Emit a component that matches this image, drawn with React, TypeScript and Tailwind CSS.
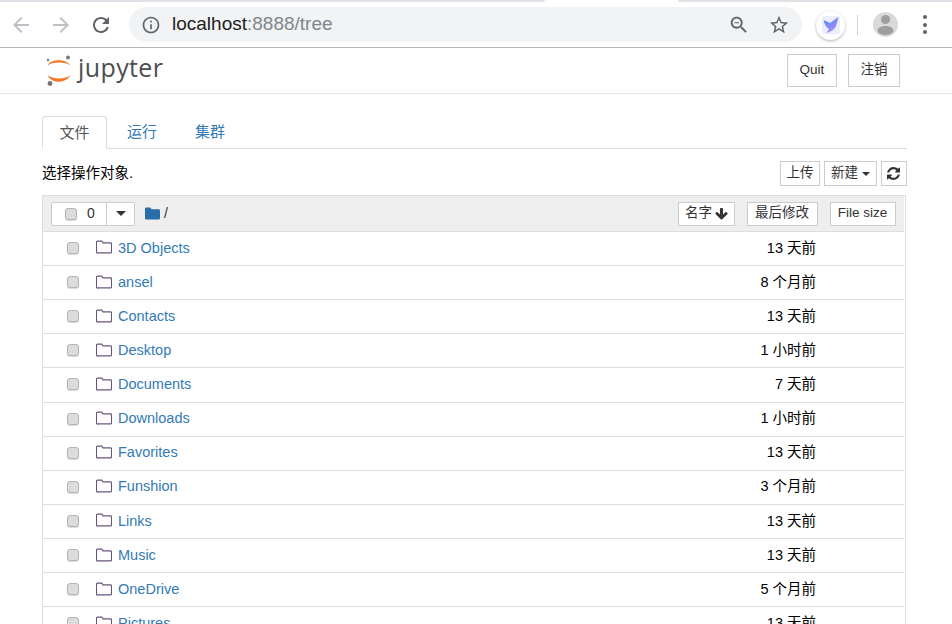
import React from "react";

const M = ({ d, className }: { d: string; className?: string }) => (
  <svg viewBox="0 0 24 24" className={className} fill="currentColor">
    <path d={d} />
  </svg>
);

const rows: [string, string][] = [
  ["3D Objects", "13 天前"],
  ["ansel", "8 个月前"],
  ["Contacts", "13 天前"],
  ["Desktop", "1 小时前"],
  ["Documents", "7 天前"],
  ["Downloads", "1 小时前"],
  ["Favorites", "13 天前"],
  ["Funshion", "3 个月前"],
  ["Links", "13 天前"],
  ["Music", "13 天前"],
  ["OneDrive", "5 个月前"],
  ["Pictures", "13 天前"],
];

const Check = ({ className }: { className?: string }) => (
  <span className={`block w-[12px] h-[12px] rounded-[3px] bg-[#dcdcdc] border border-[#b4b4b4] shadow-[0_1px_1px_rgba(0,0,0,0.15)] ${className ?? ""}`} />
);

const Caret = ({ className }: { className?: string }) => (
  <span className={`block w-0 h-0 border-x-[4.5px] border-x-transparent border-t-[4.5px] border-t-[#333] ${className ?? ""}`} />
);

const Btn = ({ children, className }: { children: React.ReactNode; className?: string }) => (
  <div className={`flex items-center justify-center border border-[#ccc] bg-white text-[#333] text-[13.5px] ${className ?? ""}`}>{children}</div>
);

export default function App() {
  return (
    <div className="w-[952px] h-[624px] overflow-hidden bg-white text-black font-['Liberation_Sans','Noto_Sans_CJK_SC',sans-serif]">
      {/* browser chrome */}
      <div className="flex h-[2px] bg-white">
        <div className="w-[545px] bg-[#dee1e6] rounded-br-[4px]" />
        <div className="w-[133px]" />
        <div className="flex-1 bg-[#dee1e6] rounded-bl-[4px]" />
      </div>
      <div className="flex items-center h-[45px] border-b border-[#b4b4b4] box-content">
        <M className="ml-[9px] w-[24px] h-[24px] text-[#bdc1c6]" d="M20 11H7.83l5.59-5.59L12 4l-8 8 8 8 1.41-1.41L7.83 13H20v-2z" />
        <M className="ml-[16px] w-[24px] h-[24px] text-[#bdc1c6]" d="M12 4l-1.41 1.41L16.17 11H4v2h12.17l-5.58 5.59L12 20l8-8z" />
        <M className="ml-[16px] w-[24px] h-[24px] text-[#5f6368]" d="M17.65 6.35C16.2 4.9 14.21 4 12 4c-4.42 0-7.99 3.58-7.99 8s3.57 8 7.99 8c3.73 0 6.84-2.55 7.73-6h-2.08c-.82 2.33-3.04 4-5.65 4-3.31 0-6-2.69-6-6s2.69-6 6-6c1.66 0 3.14.69 4.22 1.78L13 11h7V4l-2.35 2.35z" />
        <div className="ml-[16px] w-[673px] h-[35px] rounded-full bg-[#f1f3f4] flex items-center">
          <M className="ml-[12px] w-[20px] h-[20px] text-[#5f6368]" d="M11 7h2v2h-2zm0 4h2v6h-2zm1-9C6.48 2 2 6.48 2 12s4.48 10 10 10 10-4.48 10-10S17.52 2 12 2zm0 18c-4.41 0-8-3.59-8-8s3.59-8 8-8 8 3.59 8 8-3.59 8-8 8z" />
          <div className="ml-[11px] text-[19px] text-[#202124]">
            localhost<span className="text-[#80868b]">:8888/tree</span>
          </div>
          <M className="ml-auto w-[22px] h-[22px] text-[#5f6368]" d="M15.5 14h-.79l-.28-.27C15.41 12.59 16 11.11 16 9.5 16 5.91 13.09 3 9.5 3S3 5.91 3 9.5 5.91 16 9.5 16c1.61 0 3.09-.59 4.23-1.57l.27.28v.79l5 4.99L20.49 19l-4.99-5zm-6 0C7.01 14 5 11.99 5 9.5S7.01 5 9.5 5 14 7.01 14 9.5 11.99 14 9.5 14zM7 9h5v1H7z" />
          <M className="ml-[18px] mr-[12px] w-[22px] h-[22px] text-[#5f6368]" d="M22 9.24l-7.19-.62L12 2 9.19 8.63 2 9.24l5.46 4.73L5.82 21 12 17.27 18.18 21l-1.63-7.03L22 9.24zM12 15.4l-3.76 2.27 1-4.28-3.32-2.88 4.38-.38L12 6.1l1.71 4.04 4.38.38-3.32 2.88 1 4.28L12 15.4z" />
        </div>
        <div className="ml-[14px] mt-[1px] w-[29px] h-[29px] rounded-full bg-white shadow-[0_1px_3px_rgba(0,0,0,0.3)] flex items-center justify-center">
          <svg viewBox="0 0 18 18" className="w-[18px] h-[18px]">
            <defs>
              <linearGradient id="b" x1="0.2" y1="0" x2="0.7" y2="1">
                <stop offset="0" stopColor="#4a8df5" />
                <stop offset="1" stopColor="#b48cf8" />
              </linearGradient>
            </defs>
            <rect width="18" height="18" rx="2" fill="#eceefe" />
            <path d="M1.500 4 L8 7 L16.500 1 L14 10 C12.500 14 8.500 15.500 4.500 17 L7 13 C4 11.500 2.500 8 1.500 4z" fill="url(#b)" />
          </svg>
        </div>
        <div className="ml-[12px] w-px h-[20px] bg-[#d0d1d3]" />
        <div className="ml-[15px] w-[25px] h-[25px] rounded-full bg-[#dadada] overflow-hidden">
          <svg viewBox="0 0 25 25" className="w-[25px] h-[25px]">
            <circle cx="12.5" cy="7.5" r="4.6" fill="#9e9e9e" />
            <ellipse cx="12.5" cy="18.5" rx="8" ry="4.6" fill="#9e9e9e" />
          </svg>
        </div>
        <div className="ml-[25px] flex flex-col gap-[3.5px]">
          <span className="block w-[4px] h-[4px] rounded-full bg-[#5f6368]" />
          <span className="block w-[4px] h-[4px] rounded-full bg-[#5f6368]" />
          <span className="block w-[4px] h-[4px] rounded-full bg-[#5f6368]" />
        </div>
      </div>

      {/* jupyter header */}
      <div className="flex items-start h-[45px] border-b border-[#e7e7e7] box-content pl-[46px]">
        <svg viewBox="0 0 28 32" className="w-[28px] h-[32px] mt-[7px]">
          <path d="M1.500 10.500 C5 3.500 20 3.500 24.500 10.500 C20 6.500 6 6.500 1.500 10.500z" fill="#f37726" />
          <path d="M1.500 20 C6 24.500 20 24.500 24.500 20 C20 29 5 29 1.500 20z" fill="#f37726" />
          <circle cx="22" cy="2.500" r="1.900" fill="#767677" />
          <circle cx="2" cy="5" r="1.200" fill="#767677" />
          <circle cx="4" cy="28.500" r="2.400" fill="#767677" />
        </svg>
        <div className="ml-[4px] font-['Open_Sans',sans-serif] text-[25px] leading-[38px] text-[#4e4e4e] tracking-[0.4px]">jupyter</div>
        <Btn className="ml-auto mt-[6px] w-[50px] h-[33px]">Quit</Btn>
        <Btn className="ml-[11px] mr-[52px] mt-[6px] w-[52px] h-[33px]">注销</Btn>
      </div>

      {/* tabs */}
      <div className="mt-[22px] mx-[42px] w-[865px] flex h-[33px] border-b border-[#ddd] box-border text-[15px] text-[#337ab7]">
        <div className="w-[65px] h-[33px] pt-px flex items-center justify-center border border-[#ddd] border-b-white bg-white text-[#555] rounded-t-[3px]">文件</div>
        <div className="ml-[3px] w-[64px] pt-px flex items-center justify-center">运行</div>
        <div className="ml-[4px] w-[64px] pt-px flex items-center justify-center">集群</div>
      </div>

      {/* toolbar */}
      <div className="mx-[42px] w-[865px] flex items-center h-[25px] mt-[12px] text-[14.5px]">
        <div>选择操作对象.</div>
        <Btn className="ml-auto w-[40px] h-[25px]">上传</Btn>
        <Btn className="ml-[4px] w-[53px] h-[25px] gap-[4px]">新建<Caret /></Btn>
        <Btn className="ml-[4px] w-[26px] h-[25px]">
          <svg viewBox="0 0 1536 1536" className="w-[13px] h-[13px] -mt-px -ml-[2px]" fill="#333">
            <path d="M1511 928q0 5-1 7-64 268-268 434.500t-478 166.500q-146 0-282.500-55t-243.500-157l-129 129q-19 19-45 19t-45-19-19-45v-448q0-26 19-45t45-19h448q26 0 45 19t19 45-19 45l-137 137q71 66 161 102t187 36q134 0 250-65t186-179q11-17 53-117 8-23 30-23h192q13 0 22.500 9.500t9.500 22.500zm25-800v448q0 26-19 45t-45 19h-448q-26 0-45-19t-19-45 19-45l138-138q-148-137-349-137-134 0-250 65t-186 179q-11 17-53 117-8 23-30 23h-199q-13 0-22.500-9.500t-9.500-22.500v-7q65-268 270-434.500t480-166.500q146 0 284 55.500t245 156.500l130-129q19-19 45-19t45 19 19 45z" />
          </svg>
        </Btn>
      </div>

      {/* list */}
      <div className="mt-[9px] mx-[42px] w-[864px] border border-[#ddd] border-b-0 pr-px">
        <div className="flex items-center h-[35px] bg-[#eee] border-b border-[#ddd] box-content text-[#333] text-[13.5px]">
          <div className="ml-[8px] flex h-[24px] w-[84px] border border-[#ccc] rounded-[2px] bg-white">
            <div className="w-[55px] flex items-center border-r border-[#ccc] text-[14px]">
              <Check className="ml-[13px]" />
              <span className="ml-[10px]">0</span>
            </div>
            <div className="flex-1 flex items-center justify-center"><Caret className="border-x-[5px] border-t-[5px]" /></div>
          </div>
          <svg viewBox="0 0 16 13" className="ml-[10px] w-[15px] h-[13px]" fill="#286ea8">
            <path d="M1.500 0h4l1.500 2h7.500a1.500 1.500 0 0 1 1.500 1.500v8a1.500 1.500 0 0 1-1.500 1.500h-13a1.500 1.500 0 0 1-1.500-1.500v-10a1.500 1.500 0 0 1 1.500-1.500z" />
          </svg>
          <span className="ml-[4px] text-[14px]">/</span>
          <Btn className="ml-auto w-[57px] h-[24px] gap-[3px]">
            名字
            <svg viewBox="0 0 1664 1792" className="w-[13px] h-[14px]" fill="#333">
              <path d="M1611 832q0 53-37 90l-651 652q-39 37-91 37-53 0-90-37l-651-652q-38-36-38-90 0-53 38-91l74-75q39-37 91-37 53 0 90 37l294 294v-704q0-52 38-90t90-38h128q52 0 90 38t38 90v704l294-294q37-37 90-37 52 0 91 37l75 75q37 39 37 91z" />
            </svg>
          </Btn>
          <Btn className="ml-[12px] w-[71px] h-[24px] pr-px">最后修改</Btn>
          <Btn className="ml-[12px] mr-[8px] w-[66px] h-[24px] pr-px">File size</Btn>
        </div>
        <div className="-mt-[0.1px]">
          {rows.map(([name, time]) => (
            <div key={name} className="flex items-center h-[34.125px] border-b border-[#ddd] text-[14.5px]">
              <Check className="ml-[24px] -mt-px" />
              <svg viewBox="0 0 16 14" className="ml-[17px] w-[16px] h-[14px] -mt-[2px]" fill="none" stroke="#66567a" strokeWidth="1.100">
                <path d="M1.500 12.900h13a1 1 0 0 0 1-1v-8a1 1 0 0 0-1-1h-7.500l-1.200-1.800h-4.300a1 1 0 0 0-1 1v10a1 1 0 0 0 1 1z" />
              </svg>
              <span className="ml-[6px] text-[#337ab7]">{name}</span>
              <span className="ml-auto mr-[88px]">{time}</span>
            </div>
          ))}
        </div>
      </div>
    </div>
  );
}
